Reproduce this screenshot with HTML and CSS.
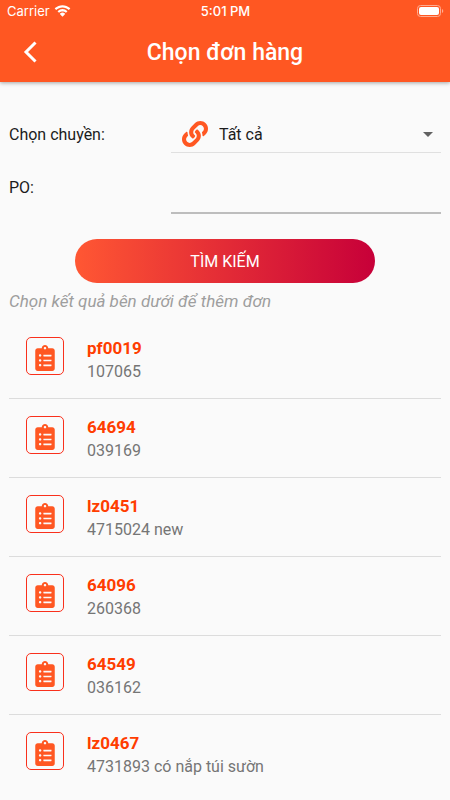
FILE: index.html
```
<!DOCTYPE html>
<html lang="vi">

<head>
    <meta charset="UTF-8">
    <meta name="viewport" content="width=device-width, initial-scale=1.0">
    <title>Chọn đơn hàng</title>
    <link rel="stylesheet" href="styles.css">
</head>

<body>
    <!-- Shared icons -->
    <svg class="icon-defs" aria-hidden="true">
        <symbol id="icon-clipboard" viewBox="0 0 384 512">
            <path d="M336 64h-80c0-35.300-28.700-64-64-64s-64 28.700-64 64H48C21.500 64 0 85.500 0 112v352c0 26.500 21.500 48 48 48h288c26.500 0 48-21.500 48-48V112c0-26.500-21.500-48-48-48zM96 424c-13.300 0-24-10.700-24-24s10.700-24 24-24 24 10.700 24 24-10.700 24-24 24zm0-96c-13.300 0-24-10.700-24-24s10.700-24 24-24 24 10.700 24 24-10.700 24-24 24zm0-96c-13.300 0-24-10.700-24-24s10.700-24 24-24 24 10.700 24 24-10.700 24-24 24zm96-192c13.300 0 24 10.700 24 24s-10.700 24-24 24-24-10.700-24-24 10.700-24 24-24zm128 368c0 4.400-3.600 8-8 8H168c-4.400 0-8-3.600-8-8v-16c0-4.400 3.600-8 8-8h144c4.400 0 8 3.600 8 8v16zm0-96c0 4.400-3.600 8-8 8H168c-4.400 0-8-3.600-8-8v-16c0-4.400 3.600-8 8-8h144c4.400 0 8 3.600 8 8v16zm0-96c0 4.400-3.600 8-8 8H168c-4.400 0-8-3.600-8-8v-16c0-4.400 3.600-8 8-8h144c4.400 0 8 3.600 8 8v16z"/>
        </symbol>
    </svg>

    <header>
        <div class="status-bar">
            <div class="carrier">
                <span>Carrier</span>
                <svg class="wifi" viewBox="0 0 17 12" aria-hidden="true">
                    <path d="M8.500 2.400c2.400 0 4.600.9 6.300 2.500l1.200-1.200a.4.4 0 0 0 0-.6C11.900-.8 5.100-.8 1 3.100a.4.4 0 0 0 0 .6l1.200 1.200C3.900 3.300 6.100 2.400 8.500 2.400zM8.500 6.400c1.300 0 2.500.5 3.500 1.400l1.200-1.300a.4.400 0 0 0 0-.6 6.900 6.900 0 0 0-9.400 0 .4.4 0 0 0 0 .6L5 7.800c1-.9 2.200-1.400 3.500-1.400zM10.900 9.200a.4.400 0 0 0 0-.6 3.600 3.600 0 0 0-4.800 0 .4.4 0 0 0 0 .6l2.100 2.200a.4.400 0 0 0 .6 0z"/>
                </svg>
            </div>
            <span class="time">5:01 PM</span>
            <svg class="battery" viewBox="0 0 27 12" aria-hidden="true">
                <rect class="battery-case" x="0.500" y="0.500" width="23" height="11" rx="3"/>
                <rect x="2" y="2" width="20" height="8" rx="2"/>
                <path class="battery-cap" d="M25 4v4a2.200 2.200 0 0 0 0-4z"/>
            </svg>
        </div>
        <div class="title-bar">
            <button type="button" class="back" aria-label="Quay lại">
                <svg viewBox="0 0 14 22" aria-hidden="true">
                    <path d="M12.500 1.500L3 11l9.500 9.500"/>
                </svg>
            </button>
            <h1>Chọn đơn hàng</h1>
        </div>
    </header>

    <main>
        <form id="search-form">
            <div class="field">
                <label for="line">Chọn chuyền:</label>
                <div class="select-box">
                    <svg class="link-icon" viewBox="0 0 512 512" aria-hidden="true">
                        <path d="M326.612 185.391c59.747 59.809 58.927 155.698.36 214.590-.11.12-.24.25-.36.37l-67.200 67.200c-59.270 59.270-155.699 59.262-214.960 0-59.270-59.260-59.270-155.700 0-214.960l37.106-37.106c9.840-9.840 26.786-3.300 27.294 10.606.648 17.722 3.826 35.527 9.690 52.721 1.986 5.822.567 12.262-3.783 16.612l-13.087 13.087c-28.026 28.026-28.905 73.660-1.155 101.960 28.024 28.579 74.086 28.749 102.325.51l67.200-67.190c28.191-28.191 28.073-73.757 0-101.830-3.701-3.694-7.429-6.564-10.341-8.569a16.037 16.037 0 0 1-6.947-12.606c-.396-10.567 3.348-21.456 11.698-29.806l21.054-21.055c5.521-5.521 14.182-6.199 20.584-1.731a152.482 152.482 0 0 1 20.522 17.197zM467.547 44.449c-59.261-59.262-155.690-59.270-214.960 0l-67.200 67.200c-.12.12-.25.25-.36.37-58.566 58.892-59.387 154.781.36 214.590a152.454 152.454 0 0 0 20.521 17.196c6.402 4.468 15.064 3.789 20.584-1.731l21.054-21.055c8.350-8.350 12.094-19.239 11.698-29.806a16.037 16.037 0 0 0-6.947-12.606c-2.912-2.005-6.640-4.875-10.341-8.569-28.073-28.073-28.191-73.639 0-101.830l67.200-67.190c28.239-28.239 74.300-28.069 102.325.51 27.750 28.300 26.872 73.934-1.155 101.960l-13.087 13.087c-4.350 4.350-5.769 10.790-3.783 16.612 5.864 17.194 9.042 34.999 9.690 52.721.509 13.906 17.454 20.446 27.294 10.606l37.106-37.106c59.271-59.259 59.271-155.699.001-214.959z"/>
                    </svg>
                    <select id="line" name="line">
                        <option>Tất cả</option>
                    </select>
                    <svg class="arrow" viewBox="0 0 10 5" aria-hidden="true">
                        <path d="M0 0h10L5 5z"/>
                    </svg>
                </div>
            </div>
            <div class="field">
                <label for="po">PO:</label>
                <input type="text" id="po" name="po">
            </div>
            <button type="submit" class="search">TÌM KIẾM</button>
        </form>

        <p class="hint">Chọn kết quả bên dưới để thêm đơn</p>

        <ul class="orders">
            <li>
                <span class="order-icon"><svg aria-hidden="true"><use href="#icon-clipboard"/></svg></span>
                <div>
                    <h2>pf0019</h2>
                    <p>107065</p>
                </div>
            </li>
            <li>
                <span class="order-icon"><svg aria-hidden="true"><use href="#icon-clipboard"/></svg></span>
                <div>
                    <h2>64694</h2>
                    <p>039169</p>
                </div>
            </li>
            <li>
                <span class="order-icon"><svg aria-hidden="true"><use href="#icon-clipboard"/></svg></span>
                <div>
                    <h2>lz0451</h2>
                    <p>4715024 new</p>
                </div>
            </li>
            <li>
                <span class="order-icon"><svg aria-hidden="true"><use href="#icon-clipboard"/></svg></span>
                <div>
                    <h2>64096</h2>
                    <p>260368</p>
                </div>
            </li>
            <li>
                <span class="order-icon"><svg aria-hidden="true"><use href="#icon-clipboard"/></svg></span>
                <div>
                    <h2>64549</h2>
                    <p>036162</p>
                </div>
            </li>
            <li>
                <span class="order-icon"><svg aria-hidden="true"><use href="#icon-clipboard"/></svg></span>
                <div>
                    <h2>lz0467</h2>
                    <p>4731893 có nắp túi sườn</p>
                </div>
            </li>
        </ul>
    </main>
</body>

</html>
```
FILE: styles.css
```
* {
    box-sizing: border-box;
}

body {
    font-family: Roboto, sans-serif;
    font-size: 16px;
    margin: 0;
    padding: 0;
    background-color: #fafafa;
    color: #1c1c1c;
}

.icon-defs {
    display: none;
}

header {
    background-color: #ff5722;
    color: #fff;
    box-shadow: 0 1px 4px rgba(0, 0, 0, 0.35);
}

.status-bar {
    display: grid;
    grid-template-columns: 1fr auto 1fr;
    align-items: center;
    height: 22px;
    padding: 0 6px 0 7px;
    font-family: Inter, sans-serif;
    font-size: 13px;
    fill: #fff;
}

.carrier {
    display: flex;
    align-items: center;
    gap: 4px;
}

.wifi {
    width: 17px;
    height: 12px;
}

.time {
    font-weight: 500;
}

.battery {
    justify-self: end;
    width: 27px;
    height: 12px;
}

.battery-case {
    fill: none;
    stroke: #ffab91;
}

.battery-cap {
    fill: #ffab91;
}

.title-bar {
    display: grid;
    grid-template-columns: 60px 1fr 60px;
    align-items: center;
    height: 60px;
}

.back {
    height: 60px;
    padding: 0;
    border: none;
    background: none;
    cursor: pointer;
}

.back svg {
    display: block;
    width: 14px;
    height: 22px;
    margin: 0 auto;
    fill: none;
    stroke: #fff;
    stroke-width: 3;
}

h1 {
    margin: 0;
    font-size: 23px;
    font-weight: 500;
    text-align: center;
}

main {
    padding: 34px 9px 0;
}

.field {
    display: grid;
    grid-template-columns: 3fr 5fr;
    align-items: center;
    margin-bottom: 12px;
}

.select-box {
    display: flex;
    align-items: center;
    height: 37px;
    padding: 0 8px 0 11px;
    border-bottom: 1px solid #e0e0e0;
}

.link-icon {
    width: 26px;
    height: 26px;
    fill: #ff5722;
}

.arrow {
    width: 10px;
    height: 5px;
    fill: #616161;
    pointer-events: none;
}

select {
    flex: 1;
    appearance: none;
    height: 36px;
    padding: 0 11px;
    border: none;
    background: none;
    color: inherit;
    font: inherit;
}

#po {
    width: 100%;
    height: 49px;
    padding: 0;
    border: none;
    border-bottom: 2px solid #bdbdbd;
    background: none;
    font: inherit;
}

label[for="po"] {
    padding-bottom: 5px;
}

.search {
    display: block;
    width: 300px;
    height: 44px;
    margin: 25px auto 0;
    border: none;
    border-radius: 22px;
    background: linear-gradient(to right, #ff5733, #c70039);
    color: #fff;
    font: inherit;
    cursor: pointer;
}

.hint {
    margin: 8px 0 9px;
    color: #9e9e9e;
    font-size: 17px;
    font-style: italic;
    line-height: 20px;
}

.orders {
    list-style: none;
    margin: 0;
    padding: 0;
}

.orders li {
    display: flex;
    gap: 23px;
    height: 79px;
    padding: 17px;
    border-bottom: 1px solid #dcdcdc;
}

.orders li:last-child {
    border-bottom: none;
}

.order-icon {
    display: flex;
    align-items: center;
    justify-content: center;
    width: 38px;
    height: 38px;
    padding-top: 3px;
    border: 1px solid #f9301c;
    border-radius: 5px;
}

.order-icon svg {
    width: 20px;
    height: 26px;
    fill: #ff5722;
}

.orders h2,
.orders p {
    margin: 0;
    line-height: 23px;
}

.orders h2 {
    color: #ff3d00;
    font-size: 17px;
    font-weight: 700;
}

.orders p {
    color: #757575;
}
```
